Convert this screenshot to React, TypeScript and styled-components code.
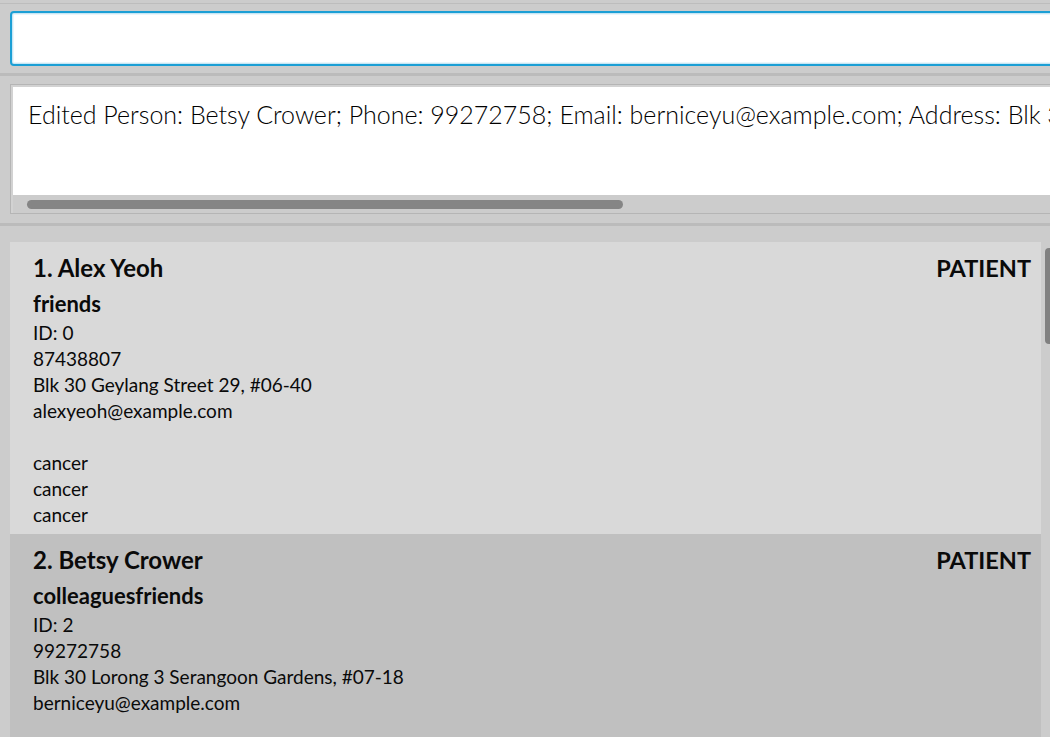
import React from "react";
import styled, { createGlobalStyle } from "styled-components";

const Global = createGlobalStyle`
  html, body { margin: 0; padding: 0; background: #cccccc; }
  body { font-family: "Lato", "Open Sans", sans-serif; }
`;

const Window = styled.div`
  width: 1050px;
  height: 737px;
  overflow: hidden;
  background: #cccccc;
  display: flex;
  flex-direction: column;
`;

const TopEdge = styled.div`
  height: 3px;
  border-bottom: 1px solid #bdbdbd;
  flex: none;
`;

const CommandPane = styled.div`
  padding: 7px 0 7px 10px;
  flex: none;
`;

const CommandField = styled.div`
  height: 51px;
  width: 1100px;
  background: #ffffff;
  border: 2px solid #1b9fd5;
  border-radius: 4px;
  box-shadow: inset 0 0 0 1px #c7e6f4, inset 0 0 0 2px #eaf6fb;
`;

const Separator = styled.div`
  height: 3px;
  background: #bbbbbb;
  flex: none;
`;

const ResultPane = styled.div`
  padding: 8px 0 9px 10px;
  flex: none;
`;

const ResultBox = styled.div`
  width: 1100px;
  border: 1px solid #b5b5b5;
  padding: 2px 0 0 2px;
  background: #d2d2d2;
  display: flex;
  flex-direction: column;
`;

const ResultText = styled.div`
  height: 108px;
  background: #ffffff;
  padding: 0 0 0 15px;
  font-family: "Lato", sans-serif;
  font-weight: 300;
  font-size: 25px;
  line-height: 55px;
  color: #000000;
  white-space: nowrap;
  overflow: hidden;
`;

const HScroll = styled.div`
  height: 18px;
  background: #cccccc;
  display: flex;
  align-items: center;
  padding-left: 14px;
`;

const HThumb = styled.div`
  width: 596px;
  height: 9px;
  border-radius: 5px;
  background: #858585;
`;

const ListPane = styled.div`
  flex: 1;
  display: flex;
  padding: 16px 0 0 10px;
  gap: 4px;
  min-height: 0;
`;

const List = styled.div`
  width: 1031px;
  flex: none;
  display: flex;
  flex-direction: column;
`;

const Card = styled.div<{ $alt?: boolean }>`
  background: ${(p) => (p.$alt ? "#c0c0c0" : "#d9d9d9")};
  padding: 9px 10px 6px 23px;
  color: #0a0a0a;
  flex: none;
`;

const NameRow = styled.div`
  display: flex;
  justify-content: space-between;
  font-weight: 700;
  font-size: 24px;
  line-height: 34px;
  height: 34px;
`;

const Patient = styled.span`
  font-size: 23.5px;
`;

const Tags = styled.div`
  font-weight: 700;
  font-size: 22px;
  line-height: 32px;
  margin-top: 3px;
`;

const Line = styled.div`
  font-size: 19px;
  line-height: 26px;
  height: 26px;
`;

const VScroll = styled.div`
  width: 12px;
  flex: none;
  padding-top: 6px;
`;

const VThumb = styled.div`
  height: 96px;
  background: #808080;
  border-radius: 4px 0 0 4px;
`;

type Person = {
  idx: number;
  name: string;
  tags: string;
  id: number;
  phone: string;
  address: string;
  email: string;
  conditions: string[];
};

const people: Person[] = [
  {
    idx: 1,
    name: "Alex Yeoh",
    tags: "friends",
    id: 0,
    phone: "87438807",
    address: "Blk 30 Geylang Street 29, #06-40",
    email: "alexyeoh@example.com",
    conditions: ["cancer", "cancer", "cancer"],
  },
  {
    idx: 2,
    name: "Betsy Crower",
    tags: "colleaguesfriends",
    id: 2,
    phone: "99272758",
    address: "Blk 30 Lorong 3 Serangoon Gardens, #07-18",
    email: "berniceyu@example.com",
    conditions: ["cancer", "cancer", "cancer"],
  },
];

export default function App() {
  return (
    <Window>
      <Global />
      <TopEdge />
      <CommandPane>
        <CommandField />
      </CommandPane>
      <Separator />
      <ResultPane>
        <ResultBox>
          <ResultText>
            Edited Person: Betsy Crower; Phone: 99272758; Email: berniceyu@example.com; Address: Blk 30 Lorong 3 Serangoon Gardens, #07-18
          </ResultText>
          <HScroll>
            <HThumb />
          </HScroll>
        </ResultBox>
      </ResultPane>
      <Separator />
      <ListPane>
        <List>
          {people.map((p, i) => (
            <Card key={p.idx} $alt={i % 2 === 1}>
              <NameRow>
                <span>
                  {p.idx}. {p.name}
                </span>
                <Patient>PATIENT</Patient>
              </NameRow>
              <Tags>{p.tags}</Tags>
              <Line>ID: {p.id}</Line>
              <Line>{p.phone}</Line>
              <Line>{p.address}</Line>
              <Line>{p.email}</Line>
              <Line />
              {p.conditions.map((c, j) => (
                <Line key={j}>{c}</Line>
              ))}
            </Card>
          ))}
        </List>
        <VScroll>
          <VThumb />
        </VScroll>
      </ListPane>
    </Window>
  );
}
